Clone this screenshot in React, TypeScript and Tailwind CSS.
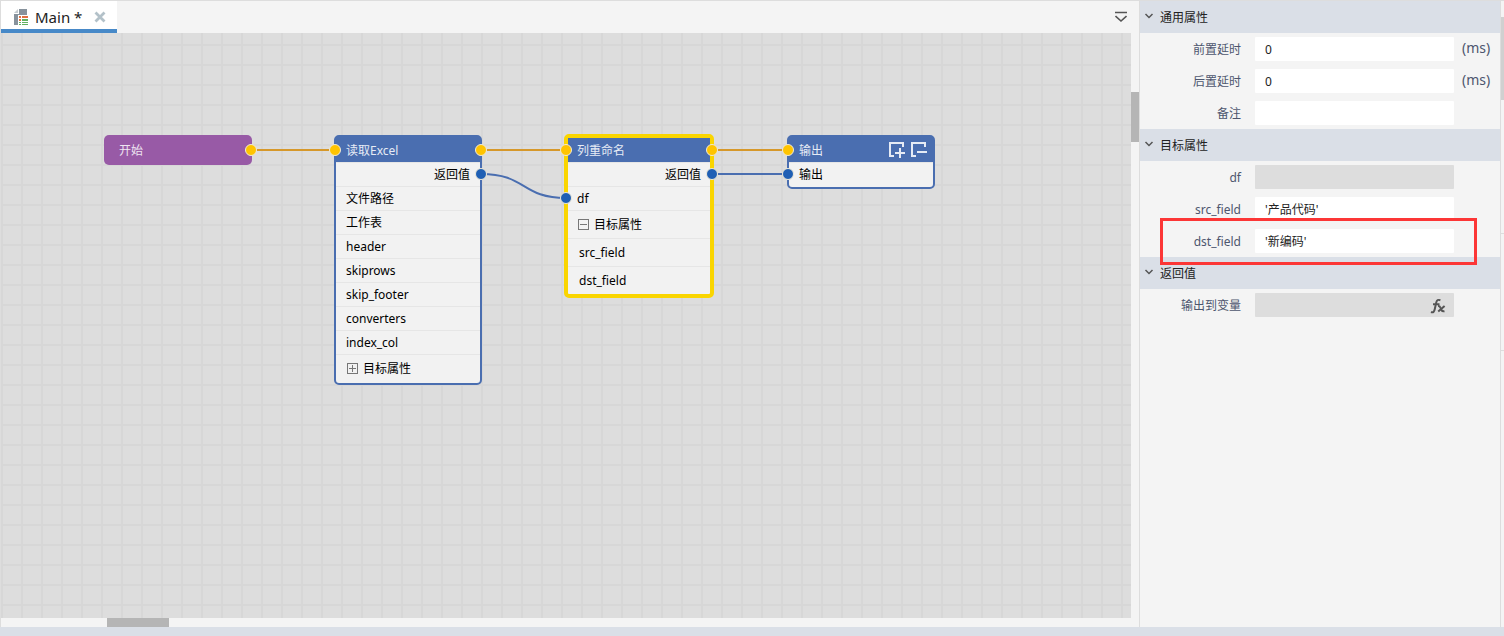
import React from 'react';

type Side = 'left' | 'right';

// Connection dot that sits on the edge of a node
const Port: React.FC<{ side: Side; color: 'yellow' | 'blue'; wide?: boolean }> = ({ side, color, wide }) => {
    const fill = color === 'yellow' ? 'bg-[#ffc400]' : 'bg-[#1f5fb4]';
    const place = side === 'left' ? (wide ? '-left-2' : '-left-[7px]') : (wide ? '-right-2' : '-right-[7px]');
    const top = color === 'blue' ? 'top-[5px]' : (wide ? 'top-[6px]' : 'top-[7px]');
    return <span className={`absolute z-10 w-3 h-3 rounded-full border border-[#f0ead8] ${fill} ${place} ${top}`} />;
};

const ExpandIcon: React.FC<{ open: boolean }> = ({ open }) => (
    <svg className="w-[11px] h-[11px] shrink-0" viewBox="0 0 11 11" fill="none" stroke="#777" shapeRendering="crispEdges">
        <path d={open ? 'M.5.5h10v10H.5zM2 5.5h7' : 'M.5.5h10v10H.5zM2 5.5h7M5.5 2v7'} />
    </svg>
);

const NodeHeader: React.FC<{ title: string; wide?: boolean; children?: React.ReactNode }> = ({ title, wide, children }) => (
    <div className={`relative flex items-center justify-between pr-[5px] text-[#e6ebf5] bg-[#4a6eb0] ${wide ? 'h-6 pl-[9px]' : 'h-[25px] pt-px pl-[10px]'}`}>
        <Port side="left" color="yellow" wide={wide} />
        <span className="pt-0.5">{title}</span>
        {children}
    </div>
);

const NodeRow: React.FC<{ tall?: boolean; className?: string; children: React.ReactNode }> = ({ tall, className = 'pl-[10px]', children }) => (
    <div className={`relative flex items-center border-t border-[#e6e6e6] ${tall ? 'h-7' : 'h-6'} ${className}`}>
        {children}
    </div>
);

const excelFields = ['文件路径', '工作表', 'header', 'skiprows', 'skip_footer', 'converters', 'index_col'];

const Canvas = () => (
    <div className="relative flex-1 min-w-0 overflow-hidden bg-[#ddd] bg-[linear-gradient(to_right,#d7d7d7_2px,transparent_2px),linear-gradient(to_bottom,#d7d7d7_2px,transparent_2px)] bg-[size:20px_20px] bg-[position:0_11px] text-xs text-black">
        <svg className="absolute left-0 top-0 w-[940px] h-[360px]" viewBox="0 0 940 360" fill="none" strokeWidth="2">
            <path stroke="#d6982a" d="M250 117H334M480 117H565M711 117H787" />
            <path stroke="#4a6eb0" d="M480 141C526 141 520 165 565 165M711 141H787" />
        </svg>

        <div className="absolute left-[103px] top-[102px] w-[148px] h-[30px] rounded-[5px] bg-[#985aa6] text-[#eee4f1] flex items-center pl-[15px] pt-0.5">
            开始
            <span className="absolute right-[-5px] top-[9px] z-10 w-3 h-3 rounded-full border border-[#f0ead8] bg-[#ffc400]" />
        </div>

        <div className="absolute left-[333px] top-[102px] w-[148px] pb-px rounded-[5px] border-2 border-[#4a6eb0] bg-[#f2f2f2]">
            <NodeHeader title="读取Excel">
                <Port side="right" color="yellow" />
            </NodeHeader>
            <NodeRow className="justify-end pr-[10px]">
                返回值
                <Port side="right" color="blue" />
            </NodeRow>
            {excelFields.map((field) => <NodeRow key={field}>{field}</NodeRow>)}
            <NodeRow tall className="pl-[11px] gap-[5px]"><ExpandIcon open={false} />目标属性</NodeRow>
        </div>

        <div className="absolute left-[563px] top-[101px] w-[150px] rounded-[5px] border-4 border-[#fad500] bg-[#f2f2f2]">
            <NodeHeader title="列重命名" wide>
                <Port side="right" color="yellow" wide />
            </NodeHeader>
            <NodeRow className="justify-end pr-[9px]">
                返回值
                <Port side="right" color="blue" wide />
            </NodeRow>
            <NodeRow className="pl-[9px]">
                <Port side="left" color="blue" wide />
                df
            </NodeRow>
            <NodeRow tall className="pl-[10px] gap-[5px]"><ExpandIcon open />目标属性</NodeRow>
            <NodeRow tall className="pl-[11px]">src_field</NodeRow>
            <NodeRow tall className="pl-[11px]">dst_field</NodeRow>
        </div>

        <div className="absolute left-[786px] top-[102px] w-[148px] pb-px rounded-[5px] border-2 border-[#4a6eb0] bg-[#f2f2f2]">
            <NodeHeader title="输出">
                <span className="flex gap-1">
                    <button type="button" aria-label="添加">
                        <svg className="block w-[18px] h-[18px]" viewBox="0 0 18 18" fill="none" stroke="#e6ebf5" strokeWidth="2">
                            <path d="M6 15H2V2H15V6M12 7V17M7 12H17" />
                        </svg>
                    </button>
                    <button type="button" aria-label="移除">
                        <svg className="block w-[18px] h-[18px]" viewBox="0 0 18 18" fill="none" stroke="#e6ebf5" strokeWidth="2">
                            <path d="M6 15H2V2H15V6M7 11H17" />
                        </svg>
                    </button>
                </span>
            </NodeHeader>
            <NodeRow>
                <Port side="left" color="blue" />
                输出
            </NodeRow>
        </div>
    </div>
);

const Section: React.FC<{ title: string; children: React.ReactNode }> = ({ title, children }) => (
    <section>
        <h2 className="h-8 flex items-center gap-1 pl-1 text-xs text-[#222] bg-[#dadfe7]">
            <svg className="w-3 h-3 shrink-0" viewBox="0 0 12 12" fill="none" stroke="#555" strokeWidth="1.5">
                <path d="M1.5 3L5 6.5L8.5 3" />
            </svg>
            <span className="pt-0.5">{title}</span>
        </h2>
        {children}
    </section>
);

const Field: React.FC<{ id: string; label: string; value?: string; unit?: string; disabled?: boolean; icon?: React.ReactNode }> = ({ id, label, value = '', unit, disabled, icon }) => (
    <div className="h-8 flex items-center">
        <label htmlFor={id} className="w-[101px] mr-[14px] pt-0.5 shrink-0 text-right text-xs text-[#4d566e]">{label}</label>
        <div className="relative flex-1 h-6">
            <input
                id={id}
                type="text"
                defaultValue={value}
                disabled={disabled}
                className="block w-full h-6 px-[10px] rounded-[1px] text-xs text-[#222] bg-white disabled:bg-[#ddd] outline-none"
            />
            {icon}
        </div>
        <span className="w-[46px] pl-2 pb-0.5 shrink-0 text-sm text-[#4d566e]">{unit}</span>
    </div>
);

const FxIcon = () => (
    <svg className="absolute right-2 top-[5px] w-4 h-4" viewBox="0 0 16 16" fill="none" stroke="#555" strokeWidth="2">
        <path d="M1 14C3.2 15 4.2 13.8 4.8 11L6.2 4.6C6.8 2 8 1.4 10.4 2.2M3 6.2H9.5" />
        <path d="M8 8C9.4 7.8 9.9 8.4 10.4 9.6L11.5 12C12.1 13.3 13 13.5 14.5 13.2M14.6 8L8.2 13.6" />
    </svg>
);

const PropertyPanel = () => (
    <aside className="relative w-[362px] shrink-0 border-x border-[#ddd] bg-[#f4f4f4]">
        <Section title="通用属性">
            <Field id="pre-delay" label="前置延时" value="0" unit="(ms)" />
            <Field id="post-delay" label="后置延时" value="0" unit="(ms)" />
            <Field id="remark" label="备注" />
        </Section>
        <Section title="目标属性">
            <Field id="df" label="df" disabled />
            <Field id="src-field" label="src_field" value="'产品代码'" />
            <Field id="dst-field" label="dst_field" value="'新编码'" />
        </Section>
        <Section title="返回值">
            <Field id="output-var" label="输出到变量" disabled icon={<FxIcon />} />
        </Section>
        <div className="absolute left-5 top-[217px] w-[317px] h-[47px] border-[3px] border-[#fc3636] pointer-events-none" />
    </aside>
);

const TabBar = () => (
    <div className="h-8 shrink-0 flex items-stretch justify-between bg-[#f4f4f4]">
        <div className="w-[116px] flex items-center pl-[13px] pt-1 bg-white border-b-4 border-[#4789c8] text-[15px] text-[#222]">
            <svg className="w-[14px] h-4 mr-[7px] shrink-0" viewBox="0 0 14 16">
                <path fill="#87929c" d="M5 0h8v6H4v10H0V5h5z" />
                <path fill="#c3c9ce" d="M4 0v4H0z" />
                <path fill="#e07040" d="M5 7h2v2H5zM8 7h6v2H8zM5 10h2v2H5z" />
                <path fill="#62b060" d="M8 10h6v2H8zM5 13h2v1H5zM8 13h6v1H8zM5 15h2v1H5zM8 15h6v1H8z" />
            </svg>
            <span className="whitespace-pre">Main *</span>
            <button type="button" aria-label="关闭" className="ml-3">
                <svg className="block w-3 h-3" viewBox="0 0 12 12" stroke="#b3c1c9" strokeWidth="2.8">
                    <path d="M1.5 1.5L10.5 10.5M10.5 1.5L1.5 10.5" />
                </svg>
            </button>
        </div>
        <button type="button" aria-label="标签列表" className="px-3">
            <svg className="block w-3 h-3" viewBox="0 0 12 12" fill="none" stroke="#555" strokeWidth="1.6">
                <path d="M0 1.5H12M.5 5L6 10L11.5 5" />
            </svg>
        </button>
    </div>
);

export default function App() {
    return (
        <div className="h-screen flex flex-col border-t border-[#ddd] bg-[#dadfe7] font-['Noto_Sans','Noto_Sans_CJK_SC',sans-serif]">
            <div className="flex-1 min-h-0 flex bg-[#f4f4f4]">
                <main className="flex-1 min-w-0 flex flex-col border-l border-[#ddd]">
                    <TabBar />
                    <div className="flex-1 min-h-0 flex">
                        <Canvas />
                        <div className="w-2 shrink-0 pt-[59px]">
                            <div className="h-[50px] bg-[#b5b5b5]" />
                        </div>
                    </div>
                    <div className="h-[9px] shrink-0 pl-[106px]">
                        <div className="w-[62px] h-full bg-[#b5b5b5]" />
                    </div>
                </main>
                <PropertyPanel />
                <div className="w-[3px] shrink-0 pt-4">
                    <div className="h-[83px] bg-[#d0d0d0]" />
                    <div className="h-[134px] border-b border-[#ddd]" />
                    <div className="h-[117px] border-b border-[#ddd]" />
                </div>
            </div>
            <div className="h-[9px] shrink-0" />
        </div>
    );
}
